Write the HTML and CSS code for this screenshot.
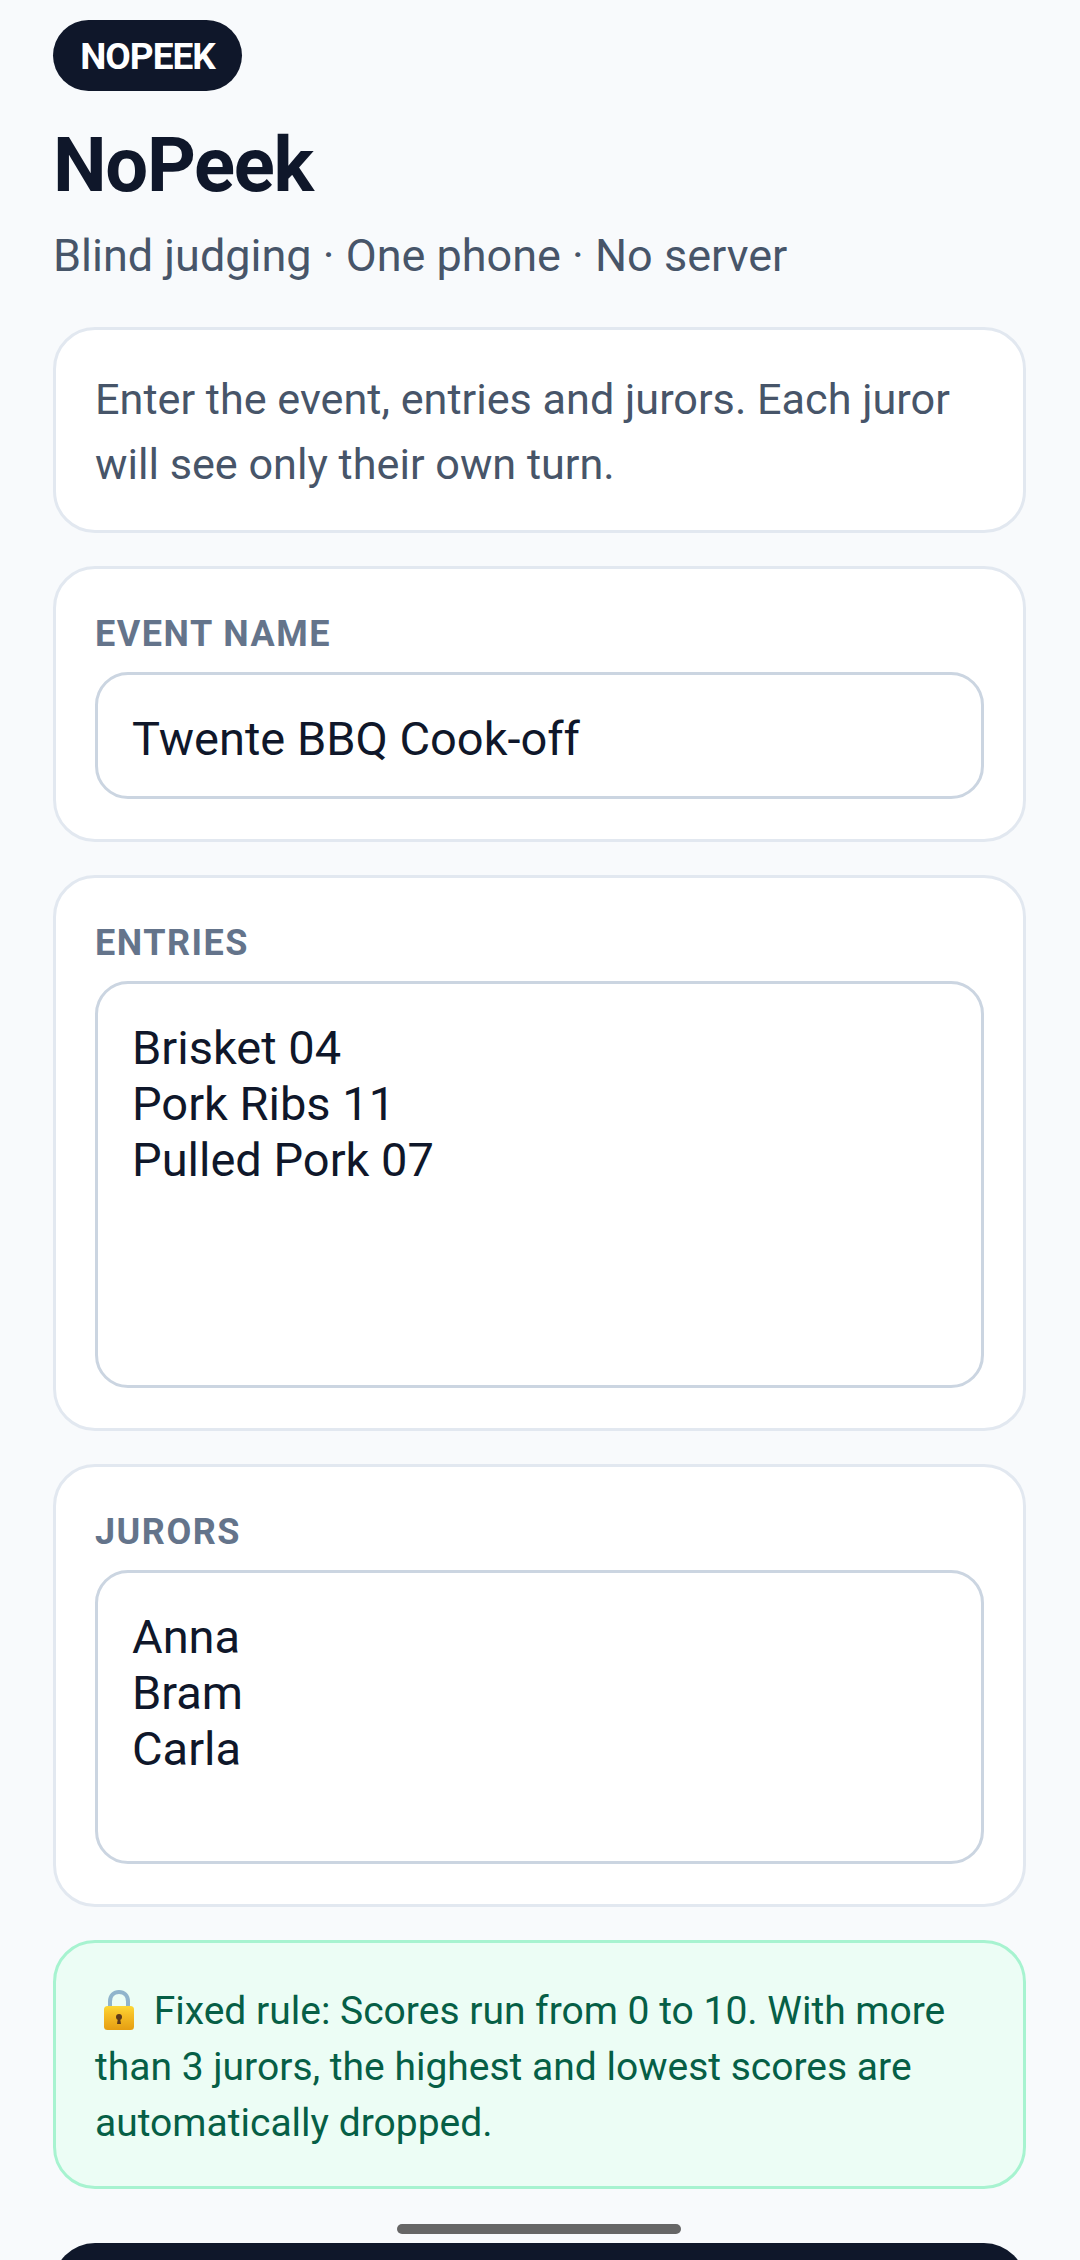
FILE: index.html
```html
<!DOCTYPE html>
<html lang="en">
<head>
    <meta charset="UTF-8">
    <meta name="viewport" content="width=device-width, initial-scale=1.0">
    <title>NoPeek</title>
    <link rel="stylesheet" href="styles.css">
</head>
<body>
    <div class="app">
        <span class="badge">NOPEEK</span>
        <h1 class="title">NoPeek</h1>
        <p class="subtitle">Blind judging · One phone · No server</p>

        <div class="card intro">Enter the event, entries and jurors. Each juror will see only their own turn.</div>

        <div class="card">
            <label class="field-label" for="event">EVENT NAME</label>
            <input class="field" id="event" type="text" value="Twente BBQ Cook-off">
        </div>

        <div class="card">
            <label class="field-label" for="entries">ENTRIES</label>
            <textarea class="field area entries" id="entries">Brisket 04
Pork Ribs 11
Pulled Pork 07</textarea>
        </div>

        <div class="card">
            <label class="field-label" for="jurors">JURORS</label>
            <textarea class="field area jurors" id="jurors">Anna
Bram
Carla</textarea>
        </div>

        <div class="rule">
            <svg class="lock" viewBox="0 0 32 41" aria-hidden="true">
                <defs>
                    <linearGradient id="lockBody" x1="0" y1="0" x2="0" y2="1">
                        <stop offset="0" stop-color="#fdd835"/>
                        <stop offset="0.35" stop-color="#f6bf26"/>
                        <stop offset="1" stop-color="#e59e12"/>
                    </linearGradient>
                </defs>
                <path d="M7 18V11.500C7 5.500 11 2 16 2S25 5.500 25 11.500V18" fill="none" stroke="#90b4cc" stroke-width="4"/>
                <rect x="1" y="16" width="30" height="24" rx="3.500" fill="url(#lockBody)"/>
                <circle cx="16" cy="27" r="3" fill="#5d3a1a"/>
                <path d="M15 28H17L18 34H14Z" fill="#5d3a1a"/>
            </svg>
            Fixed rule: Scores run from 0 to 10. With more than 3 jurors, the highest and lowest scores are automatically dropped.
        </div>

        <!-- the button runs on below the fold -->
        <div class="fold">
            <button class="start-btn"></button>
        </div>
    </div>
    <div class="home-bar"></div>
</body>
</html>
```

FILE: styles.css
```css
* {
    box-sizing: border-box;
}

html, body {
    margin: 0;
    height: 2260px;
    overflow: hidden;
    background-color: #f8fafc;
    font-family: Roboto, "Noto Sans", sans-serif;
    color: #0f172a;
}

.app {
    display: flex;
    flex-direction: column;
    align-items: stretch;
    padding: 20px 54px 0 53px;
}

.badge {
    align-self: flex-start;
    width: 189px;
    background-color: #0f172a;
    color: #fff;
    font-size: 37px;
    font-weight: 700;
    line-height: 42px;
    letter-spacing: -1px;
    text-align: center;
    padding: 16px 0 13px;
    border-radius: 36px;
}

.title {
    margin: 28px 0 0;
    font-size: 76px;
    font-weight: 700;
    line-height: 92px;
    letter-spacing: -1.300px;
}

.subtitle {
    margin: 18px 0 45px;
    font-size: 45px;
    line-height: 53px;
    color: #475569;
}

.card {
    background-color: #fff;
    border: 3px solid #e2e8f0;
    border-radius: 42px;
    padding: 44px 39px 40px;
    margin-bottom: 33px;
}

.intro {
    padding: 37px 39px 33px;
    font-size: 43.200px;
    line-height: 65px;
    color: #475569;
}

.field-label {
    display: block;
    font-size: 36px;
    font-weight: 700;
    line-height: 42px;
    letter-spacing: 1.500px;
    color: #64748b;
    margin-bottom: 17px;
}

.field {
    display: block;
    width: 100%;
    height: 127px;
    border: 3px solid #cbd5e1;
    border-radius: 33px;
    padding: 36px 34px 30px;
    background-color: #fff;
    font-family: inherit;
    font-size: 47px;
    color: #0f172a;
}

.area {
    resize: none;
    line-height: 56px;
    overflow: hidden;
}

.entries {
    height: 407px;
}

.jurors {
    height: 294px;
}

.rule {
    background-color: #ecfdf5;
    border: 3px solid #a7f3d0;
    border-radius: 42px;
    padding: 40px 39px 35px;
    font-size: 39px;
    line-height: 56px;
    color: #065f46;
}

.lock {
    width: 32px;
    height: 41px;
    vertical-align: -7px;
    margin: 0 9px 0 8px;
}

.fold {
    margin-top: 54px;
    height: 17px;
    overflow: hidden;
}

.start-btn {
    display: block;
    width: 100%;
    height: 150px;
    border: none;
    border-radius: 42px;
    background-color: #0f172a;
}

.home-bar {
    position: absolute;
    left: 397px;
    top: 2224px;
    width: 284px;
    height: 10px;
    border-radius: 5px;
    background-color: #666;
}
```
